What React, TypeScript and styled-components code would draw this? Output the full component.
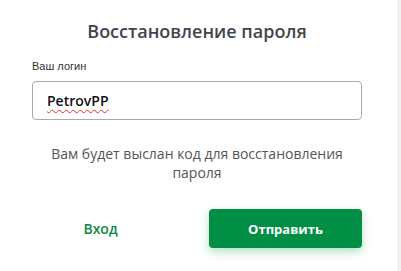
import React from 'react';
import styled, { createGlobalStyle } from 'styled-components';

const GlobalStyle = createGlobalStyle`
  html, body {
    margin: 0;
    padding: 0;
    background: #f2f2f2;
  }
  body {
    font-family: "Open Sans", "Noto Sans", sans-serif;
  }
`;

const Page = styled.div`
  display: flex;
  flex-direction: row;
  height: 271px;
`;

const Card = styled.div`
  width: 397px;
  height: 271px;
  background: #ffffff;
  display: flex;
  flex-direction: column;
  padding: 0 35px 0 32px;
  box-sizing: border-box;
`;

const Title = styled.h1`
  margin: 19px 0 0 0;
  font-size: 18px;
  font-weight: 600;
  color: #44444e;
  text-align: center;
  line-height: 24px;
`;

const Label = styled.label`
  margin-top: 16px;
  font-family: "Liberation Sans", Arial, sans-serif;
  font-size: 11px;
  color: #333333;
  line-height: 14px;
`;

const Field = styled.div`
  margin-top: 8px;
  height: 39px;
  box-sizing: border-box;
  border: 1px solid #a9a9a9;
  border-radius: 4px;
  padding: 0 14px;
  display: flex;
  align-items: center;
  font-family: "Open Sans", sans-serif;
  font-size: 14px;
  font-weight: 600;
  color: #111111;
`;

const Misspelled = styled.span`
  text-decoration: underline wavy #e0302a;
  text-decoration-thickness: 1px;
  text-underline-offset: 3px;
`;

const Hint = styled.p`
  margin: 24px 0 0 0;
  font-size: 14px;
  line-height: 19px;
  color: #555555;
  text-align: center;
`;

const Actions = styled.div`
  margin-top: 27px;
  display: flex;
  flex-direction: row;
  align-items: center;
  justify-content: space-between;
`;

const LinkButton = styled.button`
  width: 137px;
  height: 39px;
  border: none;
  background: transparent;
  font-family: "Open Sans", sans-serif;
  font-size: 14px;
  font-weight: 600;
  color: #13893f;
  cursor: pointer;
`;

const PrimaryButton = styled.button`
  width: 153px;
  height: 39px;
  border: none;
  border-radius: 4px;
  background: #008f45;
  color: #ffffff;
  font-family: "Open Sans", sans-serif;
  font-size: 13px;
  font-weight: 700;
  box-shadow: 0 4px 10px rgba(0, 160, 70, 0.3);
  cursor: pointer;
`;

export default function App() {
  return (
    <>
      <GlobalStyle />
      <Page>
        <Card>
          <Title>Восстановление пароля</Title>
          <Label>Ваш логин</Label>
          <Field role="textbox">
            <Misspelled>PetrovPP</Misspelled>
          </Field>
          <Hint>Вам будет выслан код для восстановления пароля</Hint>
          <Actions>
            <LinkButton>Вход</LinkButton>
            <PrimaryButton>Отправить</PrimaryButton>
          </Actions>
        </Card>
      </Page>
    </>
  );
}
